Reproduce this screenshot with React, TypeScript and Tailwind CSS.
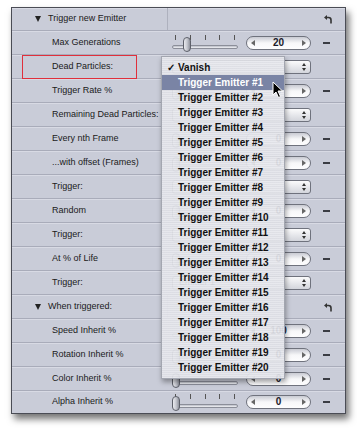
import React from "react";

type Row =
  | { kind: "header"; label: string }
  | { kind: "value"; label: string; value: string; thumb: number; ticks?: boolean }
  | { kind: "popup"; label: string; text: string };

const rows: Row[] = [
  { kind: "header", label: "Trigger new Emitter" },
  { kind: "value", label: "Max Generations", value: "20", thumb: 11, ticks: true },
  { kind: "popup", label: "Dead Particles:", text: "" },
  { kind: "value", label: "Trigger Rate %", value: "0", thumb: 0 },
  { kind: "popup", label: "Remaining Dead Particles:", text: "" },
  { kind: "value", label: "Every nth Frame", value: "0", thumb: 0 },
  { kind: "value", label: "...with offset (Frames)", value: "0", thumb: 0 },
  { kind: "popup", label: "Trigger:", text: "" },
  { kind: "value", label: "Random", value: "0", thumb: 0 },
  { kind: "popup", label: "Trigger:", text: "" },
  { kind: "value", label: "At % of Life", value: "0", thumb: 0 },
  { kind: "popup", label: "Trigger:", text: "Emitter 1" },
  { kind: "header", label: "When triggered:" },
  { kind: "value", label: "Speed Inherit %", value: "100", thumb: 56 },
  { kind: "value", label: "Rotation Inherit %", value: "0", thumb: 0 },
  { kind: "value", label: "Color Inherit %", value: "0", thumb: 0 },
  { kind: "value", label: "Alpha Inherit %", value: "0", thumb: 0, ticks: true },
];

const menuItems = ["Vanish", ...Array.from({ length: 20 }, (_, i) => `Trigger Emitter #${i + 1}`)];

function ResetIcon() {
  return (
    <svg width="10" height="10" viewBox="0 0 10 10" className="mr-[12px]">
      <path d="M4 1 L1 3.5 L4 6 Z" fill="#333" />
      <path d="M3 3.5 H5.5 A2.5 2.5 0 0 1 8 6 V9.5" fill="none" stroke="#333" strokeWidth="1.6" />
    </svg>
  );
}

function Slider({ thumb, ticks }: { thumb: number; ticks?: boolean }) {
  return (
    <div className="relative h-[18px] w-[66px]">
      {ticks && (
        <div className="absolute left-[3px] top-[1px] flex w-[60px] justify-between">
          {[0, 1, 2, 3, 4].map((i) => (
            <div key={i} className="h-[5px] w-px bg-[#555]" />
          ))}
        </div>
      )}
      <div className="absolute left-0 top-[11px] h-[4px] w-[66px] rounded-full border border-[#8b8e99] bg-gradient-to-b from-[#b9bcc6] to-[#f2f3f6]" />
      <div
        className="absolute top-[3px] h-[15px] w-[8px] rounded-b-[4px] rounded-t-[4px] border border-[#5d606a] bg-gradient-to-r from-[#e9eaee] via-[#c7c9d1] to-[#8f929c]"
        style={{ left: thumb }}
      />
    </div>
  );
}

function ValueField({ value }: { value: string }) {
  return (
    <div className="flex h-[14px] w-[65px] items-center justify-between rounded-full border border-[#6f727d] bg-gradient-to-b from-[#c9cbd3] via-[#f7f7f9] to-[#fdfdfe] px-[4px]">
      <span className="h-0 w-0 border-y-[3px] border-r-[4px] border-y-transparent border-r-[#666]" />
      <span className="text-[10px] font-bold leading-none text-[#1a1a2a]">{value}</span>
      <span className="h-0 w-0 border-y-[3px] border-l-[4px] border-y-transparent border-l-[#666]" />
    </div>
  );
}

function Popup({ text }: { text: string }) {
  return (
    <div className="flex h-[14px] w-[139px] items-center justify-between rounded-[3px] border border-[#6f727d] bg-gradient-to-b from-[#fbfbfc] to-[#d3d5dc] pl-[6px] pr-[4px]">
      <span className="text-[9px] leading-none text-[#222]">{text}</span>
      <span className="flex flex-col gap-[2px]">
        <span className="h-0 w-0 border-x-[2.5px] border-b-[3px] border-x-transparent border-b-[#333]" />
        <span className="h-0 w-0 border-x-[2.5px] border-t-[3px] border-x-transparent border-t-[#333]" />
      </span>
    </div>
  );
}

export default function App() {
  return (
    <div className="relative h-[428px] w-[357px] overflow-hidden bg-white pl-[11px] pt-[7px] font-['Liberation_Sans',Arial,sans-serif]">
      <div className="w-[335px] border border-[#4a4c55] bg-[#c9ccd8] shadow-[3px_5px_7px_rgba(0,0,0,0.55)]">
        {rows.map((row, i) => {
          const last = i === rows.length - 1;
          const h = i === 0 ? "h-[23px]" : last ? "h-[22px]" : "h-[24px]";
          return (
            <div
              key={i}
              className={`flex ${h} items-center ${last ? "" : "border-b border-[#a9acba]"} shadow-[inset_0_1px_0_#d8dae4]`}
            >
              {row.kind === "header" ? (
                <>
                  <div className="flex h-full w-[156px] items-center border-r border-[#aeb1be] pl-[23px]">
                    <span className="mr-[7px] h-0 w-0 border-x-[3.5px] border-t-[6px] border-x-transparent border-t-[#222]" />
                    <span className="text-[9px] text-[#1a1a1a]">{row.label}</span>
                  </div>
                  <div className="flex flex-1 justify-end">
                    <ResetIcon />
                  </div>
                </>
              ) : (
                <>
                  <div className="w-[156px] pl-[40px] text-[9px] text-[#1a1a1a]">{row.label}</div>
                  {row.kind === "value" ? (
                    <div className="flex items-center pl-[4px]">
                      <Slider thumb={row.thumb} ticks={row.ticks} />
                      <div className="ml-[8px]">
                        <ValueField value={row.value} />
                      </div>
                      <div className="ml-[12px] h-[2px] w-[7px] bg-[#3b3d44]" />
                    </div>
                  ) : (
                    <div className="flex items-center pl-[4px]">
                      <Popup text={row.text} />
                    </div>
                  )}
                </>
              )}
            </div>
          );
        })}
      </div>

      <div className="absolute left-[22px] top-[55px] h-[24px] w-[115px] border border-[#e0303c]" />

      <div className="absolute left-[161px] top-[56px] w-[124px] border border-[#a3a6b0] bg-[repeating-linear-gradient(0deg,rgba(232,233,238,0.93)_0px,rgba(232,233,238,0.93)_1px,rgba(222,223,229,0.93)_1px,rgba(222,223,229,0.93)_2px)] pb-[3px] pt-[3px] shadow-[1px_3px_5px_rgba(0,0,0,0.35)]">
        {menuItems.map((item, i) => (
          <div
            key={item}
            className={`flex h-[15px] items-center text-[10px] font-bold leading-none ${
              i === 1 ? "bg-[#7a84a5] text-white" : "text-[#111]"
            }`}
          >
            <span className="w-[16px] pl-[5px] text-[10px]">{i === 0 ? "✓" : ""}</span>
            <span>{item}</span>
          </div>
        ))}
      </div>

      <svg className="absolute left-[272px] top-[81px]" width="12" height="18" viewBox="0 0 12 18">
        <path d="M1 1 L1 14 L4 11 L6.5 16.5 L8.5 15.5 L6 10 L10.5 10 Z" fill="#000" stroke="#fff" strokeWidth="1" strokeLinejoin="round" />
      </svg>
    </div>
  );
}
